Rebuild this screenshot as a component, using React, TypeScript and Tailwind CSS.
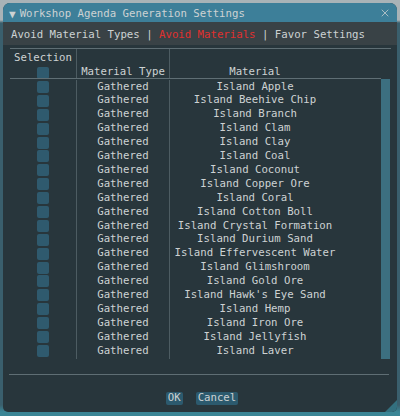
import { X } from 'lucide-react'

const materials = [
  'Island Apple',
  'Island Beehive Chip',
  'Island Branch',
  'Island Clam',
  'Island Clay',
  'Island Coal',
  'Island Coconut',
  'Island Copper Ore',
  'Island Coral',
  'Island Cotton Boll',
  'Island Crystal Formation',
  'Island Durium Sand',
  'Island Effervescent Water',
  'Island Glimshroom',
  'Island Gold Ore',
  "Island Hawk's Eye Sand",
  'Island Hemp',
  'Island Iron Ore',
  'Island Jellyfish',
  'Island Laver',
]

function Checkbox() {
  return <div className="w-[12px] h-[12px] rounded-[2px] bg-[#2f5a6e] shrink-0" />
}

export default function App() {
  return (
    <div className="w-[400px] h-[416px] bg-[linear-gradient(to_bottom,#a9b3b7_0px,#a9b3b7_20px,#3a5f6d_23px,#3a5f6d_405px,#3b8696_412px)] pt-[3px] px-[3px] font-['DejaVu_Sans_Mono',monospace] text-[10.7px] leading-none text-[#cdd2d3]">
      <div className="relative h-[409px] rounded-t-[7px] rounded-b-[5px] overflow-hidden bg-[#28363c] flex flex-col">
        {/* title bar */}
        <div className="h-[19px] bg-[#3d7f99] flex items-center pl-[6px] pr-[6px] pt-[3px] shrink-0">
          <span className="text-[11px] mr-[4px]">▼</span>
          <span>Workshop Agenda Generation Settings</span>
          <X className="ml-auto -mt-[3px] w-[12px] h-[12px]" strokeWidth={1.5} />
        </div>

        {/* menu */}
        <div className="h-[23px] bg-[#394246] flex items-center pl-[8px] pt-[4px] shrink-0">
          <span>Avoid Material Types</span>
          <span>&nbsp;|&nbsp;</span>
          <span className="text-[#e0302e]">Avoid Materials</span>
          <span>&nbsp;|&nbsp;</span>
          <span>Favor Settings</span>
        </div>

        <div className="flex flex-col pl-[7px] pr-[6px] pt-[3px] grow">
          <div className="h-[1px] bg-[#5f6e74]" />
          {/* header */}
          <div className="flex h-[29px]">
            <div className="w-[67px] flex flex-col items-center pt-[4px] gap-[3px] border-r border-[#4d5c62]">
              <span>Selection</span>
              <Checkbox />
            </div>
            <div className="w-[93px] flex items-end justify-center border-r border-[#4d5c62]">
              Material Type
            </div>
            <div className="w-[170px] flex items-end justify-center">Material</div>
          </div>
          <div className="h-[1px] bg-[#5f6e74] mr-[10px]" />

          {/* body */}
          <div className="flex h-[280px] overflow-hidden">
            <div className="flex flex-col pt-[1px]">
              {materials.map((m) => (
                <div key={m} className="flex h-[13.9px] shrink-0">
                  <div className="w-[67px] flex items-center justify-center border-r border-[#4d5c62]">
                    <Checkbox />
                  </div>
                  <div className="w-[93px] flex items-center justify-center border-r border-[#4d5c62]">
                    Gathered
                  </div>
                  <div className="w-[170px] flex items-center justify-center whitespace-nowrap">{m}</div>
                </div>
              ))}
              <div className="flex h-[13.9px] shrink-0">
                <div className="w-[67px] flex items-center justify-center border-r border-[#4d5c62]">
                  <Checkbox />
                </div>
                <div className="w-[93px] border-r border-[#4d5c62]" />
              </div>
            </div>
            <div className="ml-auto w-[9px] mr-[1px] bg-[#2b444d] flex">
              <div className="w-full h-full bg-[#3c6f80]" />
            </div>
          </div>

          <div className="mt-[15px] h-[1px] bg-[#5f6e74] -ml-[1px] mr-[2px]" />

          {/* buttons */}
          <div className="flex justify-center gap-[13px] mt-[17px] pl-[3px]">
            <span className="bg-[#2c5a6e] rounded-[2px] px-[2px] py-[1px]">OK</span>
            <span className="bg-[#2c5a6e] rounded-[2px] px-[2px] py-[1px]">Cancel</span>
          </div>
        </div>

        {/* resize grip */}
        <div className="absolute right-0 bottom-0 w-0 h-0 border-l-[12px] border-l-transparent border-b-[12px] border-b-[#33707f]" />
      </div>
    </div>
  )
}
